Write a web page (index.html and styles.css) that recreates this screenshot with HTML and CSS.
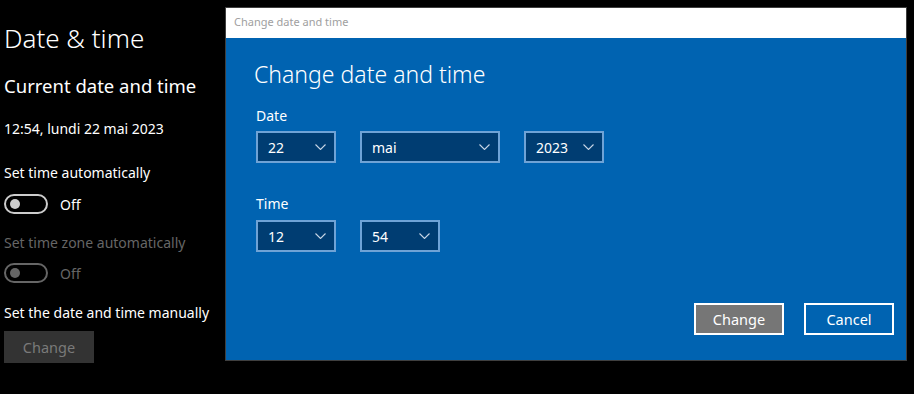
FILE: index.html
```html
<!DOCTYPE html>
<html lang="fr">
<head>
  <meta charset="UTF-8">
  <meta name="viewport" content="width=device-width, initial-scale=1.0">
  <title>Date &amp; time</title>
  <link rel="stylesheet" href="styles.css">
</head>
<body>
  <div class="settings">
    <h1>Date &amp; time</h1>
    <h2>Current date and time</h2>
    <div class="now">12:54, lundi 22 mai 2023</div>

    <div class="setting">
      <div class="setting-label">Set time automatically</div>
      <div class="toggle-row">
        <span class="toggle"><span class="knob"></span></span>
        <span class="toggle-text">Off</span>
      </div>
    </div>

    <div class="setting disabled">
      <div class="setting-label">Set time zone automatically</div>
      <div class="toggle-row">
        <span class="toggle"><span class="knob"></span></span>
        <span class="toggle-text">Off</span>
      </div>
    </div>

    <div class="setting manual">
      <div class="setting-label">Set the date and time manually</div>
      <button class="change-btn">Change</button>
    </div>
  </div>

  <div class="dialog">
    <div class="titlebar">Change date and time</div>
    <div class="dialog-body">
      <div class="dialog-title">Change date and time</div>

      <div class="field-label">Date</div>
      <div class="combo-row">
        <div class="combo small"><span>22</span><svg class="chev" viewBox="0 0 11 6"><path d="M0.5 0.5 L5.5 5.5 L10.5 0.5"/></svg></div>
        <div class="combo wide"><span>mai</span><svg class="chev" viewBox="0 0 11 6"><path d="M0.5 0.5 L5.5 5.5 L10.5 0.5"/></svg></div>
        <div class="combo small"><span>2023</span><svg class="chev" viewBox="0 0 11 6"><path d="M0.5 0.5 L5.5 5.5 L10.5 0.5"/></svg></div>
      </div>

      <div class="field-label time-label">Time</div>
      <div class="combo-row time-row">
        <div class="combo small"><span>12</span><svg class="chev" viewBox="0 0 11 6"><path d="M0.5 0.5 L5.5 5.5 L10.5 0.5"/></svg></div>
        <div class="combo small"><span>54</span><svg class="chev" viewBox="0 0 11 6"><path d="M0.5 0.5 L5.5 5.5 L10.5 0.5"/></svg></div>
      </div>

      <div class="actions">
        <button class="dlg-btn primary">Change</button>
        <button class="dlg-btn">Cancel</button>
      </div>
    </div>
  </div>
</body>
</html>
```

FILE: styles.css
```css
body {
  margin: 0;
  background: #000;
  color: #fff;
  font-family: 'Noto Sans', 'Open Sans', sans-serif;
  width: 914px;
  height: 394px;
  overflow: hidden;
  position: relative;
}

.settings {
  padding: 18px 0 0 4px;
}

h1 {
  margin: 0;
  font-size: 26px;
  font-weight: 300;
  line-height: 40px;
}

h2 {
  margin: 14px 0 0;
  font-size: 18.5px;
  font-weight: 400;
  line-height: 28px;
}

.now {
  margin-top: 19px;
  font-size: 14px;
  line-height: 20px;
}

.setting {
  margin-top: 24px;
}

.setting-label {
  font-size: 14px;
  line-height: 20px;
}

.toggle-row {
  display: flex;
  align-items: center;
  gap: 12px;
  margin-top: 11px;
  height: 20px;
}

.toggle {
  box-sizing: border-box;
  width: 44px;
  height: 20px;
  border: 2px solid #ccc;
  border-radius: 10px;
  display: flex;
  align-items: center;
  padding-left: 4px;
}

.knob {
  width: 10px;
  height: 10px;
  border-radius: 50%;
  background: #ccc;
}

.toggle-text {
  font-size: 14px;
}

.setting.disabled {
  color: #666;
  margin-top: 19px;
}

.setting.disabled .toggle-row {
  margin-top: 10px;
}

.setting.disabled .toggle {
  border-color: #666;
}

.setting.disabled .knob {
  background: #666;
}

.setting.manual {
  margin-top: 20px;
}

.change-btn {
  display: block;
  margin-top: 8px;
  width: 90px;
  height: 32px;
  border: none;
  background: #333;
  color: #7a7a7a;
  font-family: inherit;
  font-size: 14.5px;
}

/* dialog window */
.dialog {
  position: absolute;
  left: 225px;
  top: 7px;
  width: 680px;
  height: 352px;
  border: 1px solid #3f3f3f;
  display: flex;
  flex-direction: column;
}

.titlebar {
  height: 30px;
  background: #fff;
  color: #a0a0a0;
  font-size: 11px;
  line-height: 28px;
  padding-left: 8px;
}

.dialog-body {
  flex: 1;
  background: #0063b1;
  padding: 21px 12px 0 30px;
  display: flex;
  flex-direction: column;
}

.dialog-title {
  margin-left: -2px;
  font-size: 23px;
  font-weight: 300;
  line-height: 30px;
}

.field-label {
  margin-top: 17px;
  font-size: 14px;
  line-height: 20px;
}

.time-label {
  margin-top: 31px;
}

.combo-row {
  display: flex;
  gap: 24px;
  margin-top: 5px;
}

.time-row {
  margin-top: 6px;
}

.combo {
  height: 32px;
  box-sizing: border-box;
  border: 2px solid #6fa3d6;
  background: #003d72;
  display: flex;
  align-items: center;
  justify-content: space-between;
  padding: 0 8px 0 10px;
  font-size: 14px;
}

.combo.small {
  width: 80px;
}

.combo.wide {
  width: 140px;
}

.chev {
  width: 11px;
  height: 6px;
  fill: none;
  stroke: #c8d6e6;
  stroke-width: 1.1;
}

.actions {
  margin-top: auto;
  margin-bottom: 25px;
  display: flex;
  justify-content: flex-end;
  gap: 20px;
}

.dlg-btn {
  width: 90px;
  height: 32px;
  border: 2px solid #fff;
  background: #0063b1;
  color: #fff;
  font-family: inherit;
  font-size: 14.5px;
}

.dlg-btn.primary {
  background: #767676;
}
```
